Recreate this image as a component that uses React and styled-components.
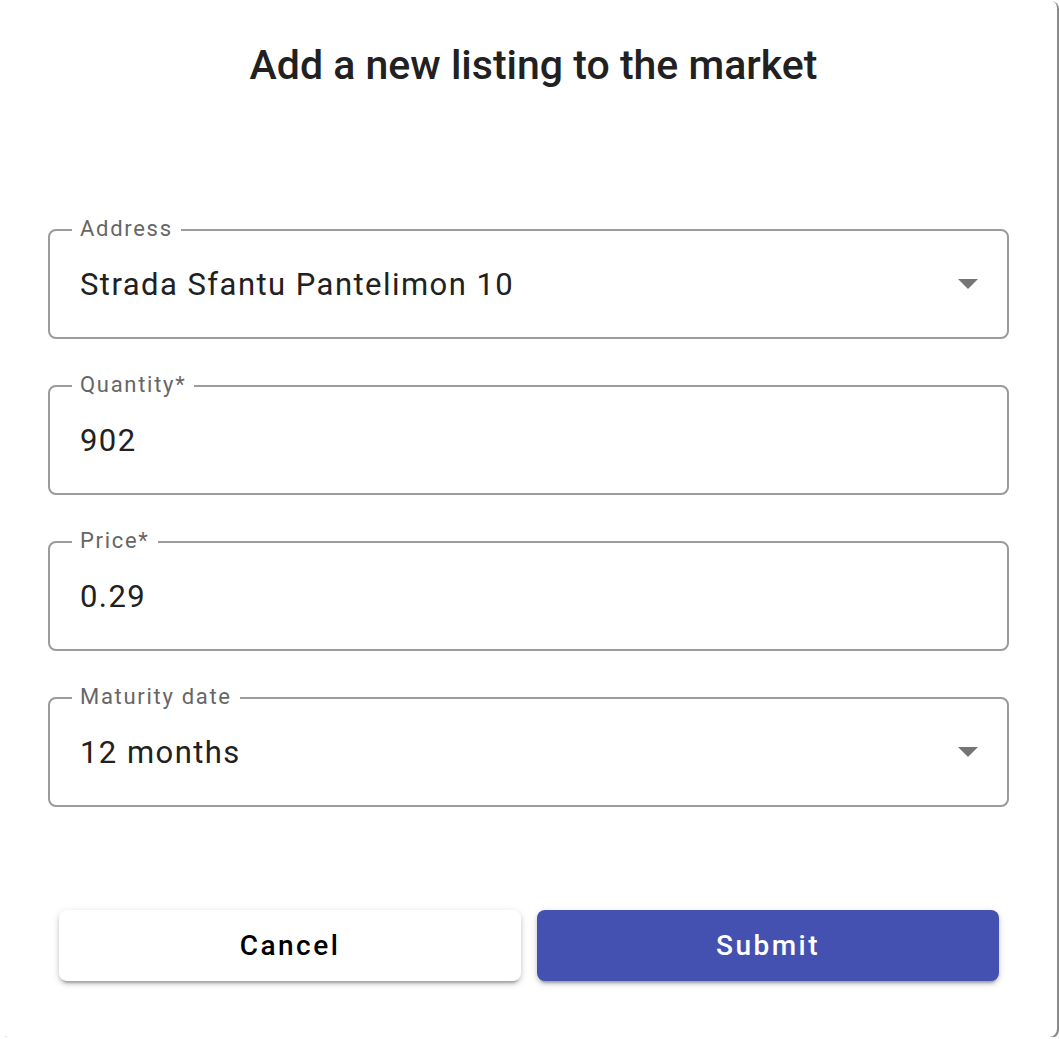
import React from "react";
import styled, { createGlobalStyle } from "styled-components";

const GlobalStyle = createGlobalStyle`
    body {
        margin: 0;
        background: #ffffff;
        font-family: Roboto, "Liberation Sans", sans-serif;
    }
`;

const fields = [
    { label: "Address", value: "Strada Sfantu Pantelimon 10", select: true },
    { label: "Quantity*", value: "902" },
    { label: "Price*", value: "0.29" },
    { label: "Maturity date", value: "12 months", select: true },
];

function Arrow() {
    return (
        <svg width="20" height="10" viewBox="0 0 20 10">
            <path d="M0 0 L20 0 L10 10 Z" fill="#757575" />
        </svg>
    );
}

export default function App() {
    return (
        <>
            <GlobalStyle />
            <Dialog>
                <Title>Add a new listing to the market</Title>
                <Form>
                    {fields.map((f) => (
                        <Field key={f.label}>
                            <Label>{f.label}</Label>
                            <Value>{f.value}</Value>
                            {f.select && (
                                <ArrowBox>
                                    <Arrow />
                                </ArrowBox>
                            )}
                        </Field>
                    ))}
                </Form>
                <Actions>
                    <Button>Cancel</Button>
                    <Button $primary>Submit</Button>
                </Actions>
            </Dialog>
        </>
    );
}

const Dialog = styled.div`
    width: 1057px;
    height: 1037px;
    box-sizing: border-box;
    background: #ffffff;
    border-radius: 8px;
    box-shadow: 2px 1px 0 0 #8a8a8a;
    display: flex;
    flex-direction: column;
`;

const Title = styled.h2`
    margin: 0;
    padding: 41px 0 0 10px;
    font-size: 41px;
    line-height: 48px;
    font-weight: 500;
    color: #212121;
    text-align: center;
`;

const Form = styled.div`
    display: flex;
    flex-direction: column;
    gap: 46px;
    padding: 0 48px;
    margin-top: 140px;
`;

const Field = styled.div`
    position: relative;
    height: 110px;
    box-sizing: border-box;
    border: 2px solid #9b9b9b;
    border-radius: 8px;
    display: flex;
    align-items: center;
    padding: 0 30px;
`;

const Label = styled.span`
    position: absolute;
    left: 22px;
    top: -15px;
    padding: 0 8px;
    background: #ffffff;
    font-size: 22px;
    line-height: 26px;
    color: #666666;
    letter-spacing: 1.7px;
`;

const Value = styled.div`
    flex: 1;
    font-size: 31px;
    color: #212121;
    letter-spacing: 1.45px;
`;

const ArrowBox = styled.div`
    display: flex;
    align-items: center;
    margin-right: -1px;
`;

const Actions = styled.div`
    display: flex;
    gap: 16px;
    padding: 0 58px 0 59px;
    margin-top: 103px;
`;

const Button = styled.button`
    flex: 1;
    height: 71px;
    border: none;
    border-radius: 8px;
    font-family: Roboto, "Liberation Sans", sans-serif;
    font-size: 28px;
    font-weight: 500;
    letter-spacing: 2.5px;
    color: ${(p) => (p.$primary ? "#ffffff" : "#000000")};
    background: ${(p) => (p.$primary ? "#4451b0" : "#ffffff")};
    box-shadow: 0 5px 2px -3px rgba(0, 0, 0, 0.2),
        0 3px 4px 0 rgba(0, 0, 0, 0.14), 0 2px 9px 0 rgba(0, 0, 0, 0.12);
    cursor: pointer;
`;
